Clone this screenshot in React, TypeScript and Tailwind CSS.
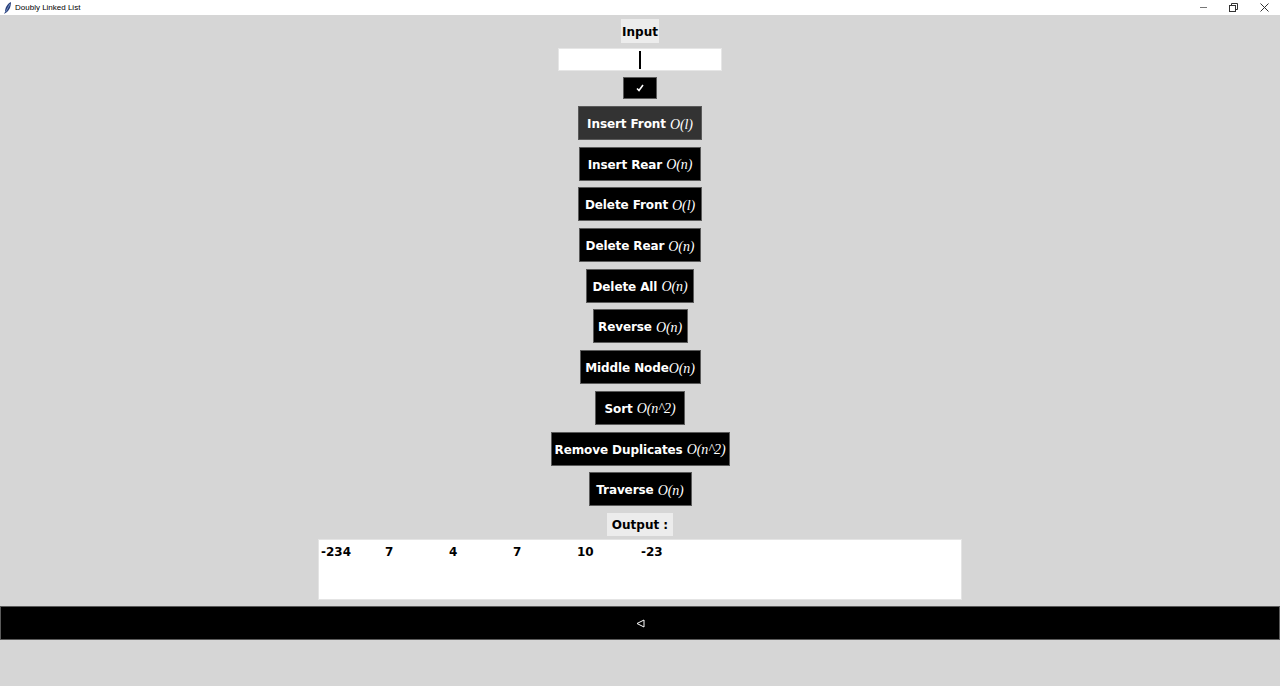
import React from "react";

const font = { fontFamily: '"Comic Sans MS", "DejaVu Sans", sans-serif' };

function Btn({ label, o, w, active }: { label: string; o: string; w: string; active?: boolean }) {
  return (
    <div
      className={`${w} h-[34px] pt-[2px] flex items-center justify-center border border-[#5a5a5a] ${active ? "bg-[#333333]" : "bg-black"} text-white text-[12px] font-bold whitespace-pre tracking-[-0.1px]`}
      style={font}
    >
      <span>{label}</span>
      <span className="font-normal italic text-[14px]" style={{ fontFamily: '"Liberation Serif", serif' }}>
        {o}
      </span>
    </div>
  );
}

export default function App() {
  const buttons: { label: string; o: string; w: string; active?: boolean }[] = [
    { label: "Insert Front ", o: "O(l)", w: "w-[124px]", active: true },
    { label: "Insert Rear ", o: "O(n)", w: "w-[122px]" },
    { label: "Delete Front ", o: "O(l)", w: "w-[124px]" },
    { label: "Delete Rear ", o: "O(n)", w: "w-[122px]" },
    { label: "Delete All ", o: "O(n)", w: "w-[108px]" },
    { label: "Reverse ", o: "O(n)", w: "w-[95px]" },
    { label: "Middle Node", o: "O(n)", w: "w-[121px]" },
    { label: "Sort ", o: "O(n^2)", w: "w-[90px]" },
    { label: "Remove Duplicates ", o: "O(n^2)", w: "w-[179px]" },
    { label: "Traverse ", o: "O(n)", w: "w-[103px]" },
  ];
  const vals = ["-234", "7", "4", "7", "10", "-23"];
  return (
    <div className="w-[1280px] h-[686px] bg-[#d6d6d6] flex flex-col overflow-hidden">
      {/* title bar */}
      <div className="h-[15px] bg-white flex items-center shrink-0">
        <svg width="10" height="12" viewBox="0 0 10 12" className="ml-[3px]">
          <path d="M8 0 C4 2 2 6 2 10 L1 12 L2.5 11 C6 9 8 5 8 0 Z" fill="#2a3f7a" />
          <path d="M7 2 L2.5 10" stroke="#7fa0d0" strokeWidth="0.8" />
        </svg>
        <span className="ml-[2px] text-[8px] text-black" style={{ fontFamily: '"Liberation Sans", sans-serif' }}>
          Doubly Linked List
        </span>
        <div className="ml-auto flex items-center h-full">
          <div className="w-[30px] h-full flex items-center justify-center">
            <div className="w-[7px] h-px bg-[#777]" />
          </div>
          <div className="w-[30px] h-full flex items-center justify-center">
            <svg width="9" height="9" viewBox="0 0 9 9">
              <rect x="0.5" y="2.5" width="6" height="6" fill="none" stroke="#333" strokeWidth="1" />
              <path d="M2.5 2.5 V0.5 H8.5 V6.5 H6.5" fill="none" stroke="#333" strokeWidth="1" />
            </svg>
          </div>
          <div className="w-[32px] h-full flex items-center justify-center">
            <svg width="9" height="9" viewBox="0 0 9 9">
              <path d="M0.5 0.5 L8.5 8.5 M8.5 0.5 L0.5 8.5" stroke="#333" strokeWidth="1" />
            </svg>
          </div>
        </div>
      </div>

      <div className="flex flex-col items-center">
        <div
          className="mt-[4px] w-[38px] h-[24px] pt-[1px] bg-[#ececec] flex items-center justify-center text-[12px] font-bold text-black"
          style={font}
        >
          Input
        </div>
        <div className="mt-[5px] w-[164px] h-[23px] bg-white border border-[#e6e6e6] flex items-center justify-center">
          <div className="w-[2px] h-[18px] bg-black" />
        </div>
        <div className="mt-[6px] w-[34px] h-[22px] bg-black border border-[#5a5a5a] flex items-center justify-center">
          <svg width="8" height="8" viewBox="0 0 8 8">
            <path d="M1 4.5 L3 6.5 L7 1" fill="none" stroke="white" strokeWidth="1.6" />
          </svg>
        </div>
        <div className="mt-[7px] flex flex-col items-center gap-[6.7px]">
          {buttons.map((b) => (
            <Btn key={b.label} {...b} />
          ))}
        </div>
        <div
          className="mt-[7px] w-[66px] h-[23px] pt-[1px] bg-[#ececec] flex items-center justify-center text-[12px] font-bold text-black whitespace-pre"
          style={font}
        >
          Output :
        </div>
        <div
          className="mt-[3px] w-[644px] h-[61px] bg-white border border-[#e4e4e4] pl-[2px] pt-[3px] text-[12px] font-bold text-black flex items-start"
          style={font}
        >
          {vals.map((v, i) => (
            <span key={i} className="inline-block w-[64px]">
              {v}
            </span>
          ))}
        </div>
      </div>
      <div className="mt-[6px] h-[34px] bg-black border border-[#5a5a5a] flex items-center justify-center">
        <svg width="9" height="9" viewBox="0 0 9 9">
          <path d="M1 4.5 L8 1 L8 8 Z" fill="none" stroke="white" strokeWidth="1" />
        </svg>
      </div>
    </div>
  );
}
